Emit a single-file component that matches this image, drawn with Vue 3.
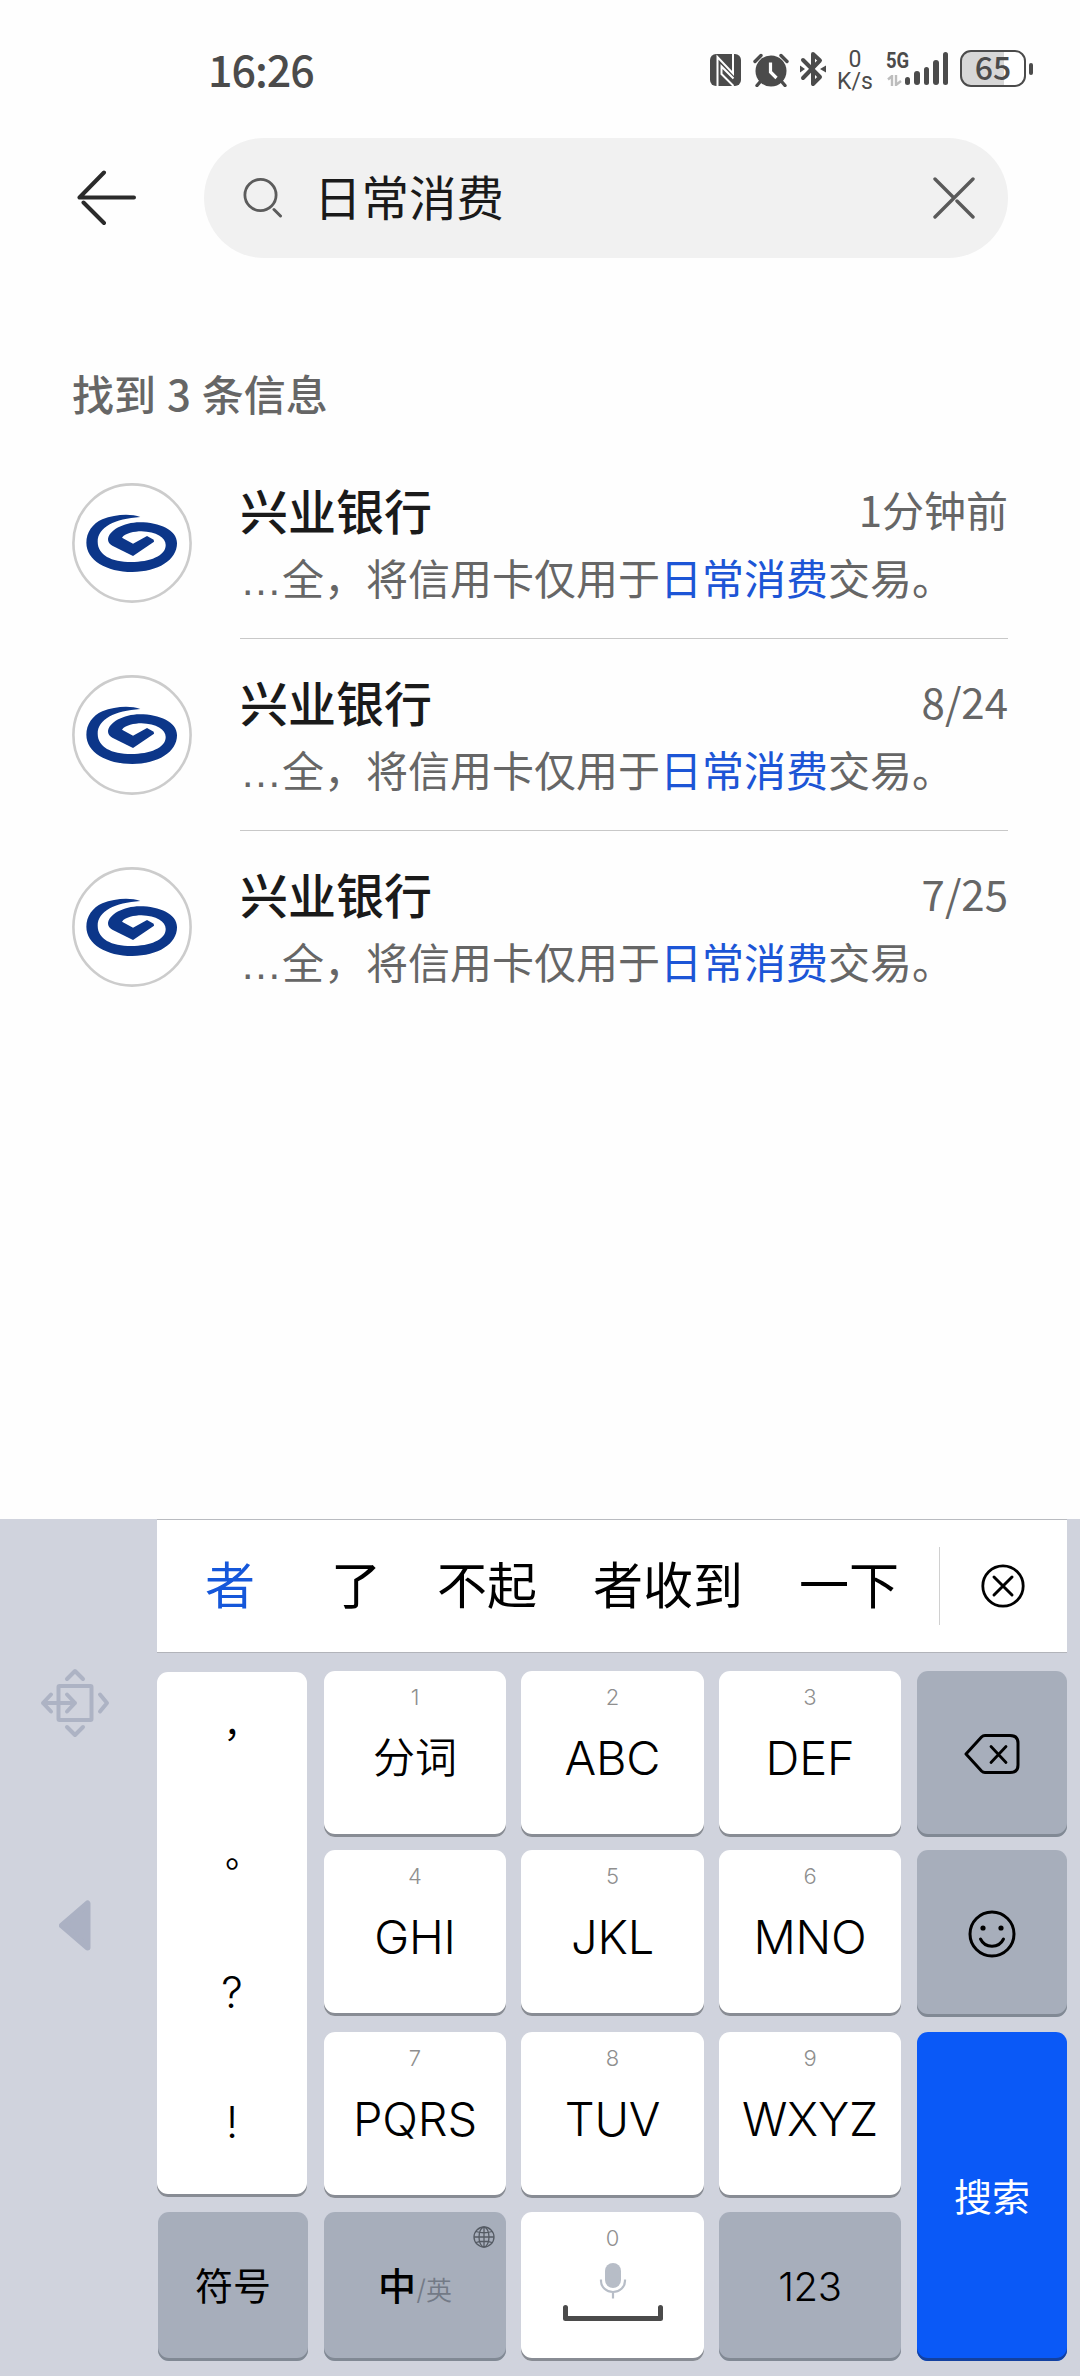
<script setup>
const results = [
  { name: '兴业银行', time: '1分钟前' },
  { name: '兴业银行', time: '8/24' },
  { name: '兴业银行', time: '7/25' },
]
const bars = [8, 14, 18, 25, 33]
const keys = [
  { n: '1', t: '分词', cjk: true },
  { n: '2', t: 'ABC' },
  { n: '3', t: 'DEF' },
  { n: '4', t: 'GHI' },
  { n: '5', t: 'JKL' },
  { n: '6', t: 'MNO' },
  { n: '7', t: 'PQRS' },
  { n: '8', t: 'TUV' },
  { n: '9', t: 'WXYZ' },
]
</script>

<template>
  <div class="screen">
    <header class="status">
      <span class="clock">16:26</span>
      <div class="indicators">
        <svg class="nfc" width="31" height="32" viewBox="0 0 31 32">
          <rect width="31" height="32" rx="6" fill="#4b4b4b" />
          <path d="M7.500 32V3L23 19.500V0M23.500 32 11.500 20V12.500L23.500 24.500" fill="none" stroke="#fff" stroke-width="2" />
        </svg>
        <svg class="alarm" width="36" height="34" viewBox="0 0 36 34">
          <path d="M2 8.500 8 2.500M34 8.500 28 2.500M7 29 4 32.500M29 29l3 3.500" stroke="#4b4b4b" stroke-width="3.400" stroke-linecap="round" />
          <circle cx="18" cy="18" r="15.500" fill="#4b4b4b" />
          <path d="M17.500 9.500V19l6 6" fill="none" stroke="#fff" stroke-width="3.200" />
        </svg>
        <svg class="bt" width="26" height="36" viewBox="0 0 26 36">
          <path d="M3 9 20 26 13 33V3L20 9.500 3 27" fill="none" stroke="#4b4b4b" stroke-width="4" stroke-linecap="round" stroke-linejoin="round" />
          <path d="M0 14.500 5 18 0 21.500ZM26 14.500 20 18l6 3.500Z" fill="#4b4b4b" />
        </svg>
        <div class="rate"><span>0</span><span>K/s</span></div>
        <div class="signal">
          <div class="net">
            <b>5G</b>
            <svg width="15" height="11" viewBox="0 0 15 11"><path d="M1 4.500 5 1V11M9 0V10L14 6" fill="none" stroke="#bdbdbd" stroke-width="2.400" /></svg>
          </div>
          <div class="bars"><i v-for="h in bars" :key="h" :style="{ height: h + 'px' }"></i></div>
        </div>
        <div class="battery"><div class="cell">65</div><i></i></div>
      </div>
    </header>

    <div class="searchrow">
      <svg class="back" width="60" height="56" viewBox="0 0 60 56">
        <path d="M27 2.500 2.500 27.500H57M6.500 32.500 27 53" fill="none" stroke="#2b2b2b" stroke-width="4" stroke-linecap="round" stroke-linejoin="round" />
      </svg>
      <div class="pill">
        <svg width="40" height="40" viewBox="0 0 40 40">
          <circle cx="17.500" cy="17" r="15.600" fill="none" stroke="#5c5c5c" stroke-width="2.800" />
          <path d="M31 31.500 37.500 38" stroke="#5c5c5c" stroke-width="3" stroke-linecap="round" />
        </svg>
        <span class="query">日常消费</span>
        <svg width="42" height="42" viewBox="0 0 42 42">
          <path d="M2 2 20 20M24 24 40 40M40 2 2 40" stroke="#5a5a5a" stroke-width="3.400" stroke-linecap="round" />
        </svg>
      </div>
    </div>

    <p class="count">找到 3 条信息</p>

    <ul class="list">
      <li v-for="(r, i) in results" :key="i">
        <svg class="avatar" width="120" height="120" viewBox="0 0 120 120">
          <circle cx="60" cy="60" r="58.600" fill="#fff" stroke="#ccc" stroke-width="2.600" />
          <path transform="translate(-12.300 -13) scale(.3333)" fill="#0c3689" d="M242 141C212 130 165 133 128 148C98 161 80 188 80 218C80 270 140 306 218 306C295 306 352 270 352 220C352 180 300 157 240 157C192 157 145 182 145 210C146 218 150 222 158 227L220 258L283 215L282 209L262 198L220 221L187 203C195 190 225 184 245 184C290 186 318 202 318 225C318 258 270 276 215 276C155 276 114 255 114 215C114 172 165 146 242 141Z" />
        </svg>
        <div class="body">
          <div class="top"><span class="name">{{ r.name }}</span><span class="time">{{ r.time }}</span></div>
          <div class="snippet"><span class="dots">…</span>全，将信用卡仅用于<em>日常消费</em>交易。</div>
        </div>
      </li>
    </ul>

    <section class="keyboard">
      <aside>
        <svg width="70" height="70" viewBox="0 0 70 70" fill="none" stroke="#adb3c4" stroke-width="4" stroke-linecap="round" stroke-linejoin="round">
          <rect x="18.500" y="18" width="33" height="34" rx="1" />
          <path d="M27 11 35 3l8 8M27 59l8 8 8-8M60 26.500 67 35l-7 8.500M11 26.500 3 35l8 8.500M3 35H35M27 26.500 35 35l-8 8.500" />
        </svg>
        <svg class="tri" width="32" height="51" viewBox="0 0 32 51"><path d="M3 25.500 28.500 3.500V47.500Z" fill="#abb1c3" stroke="#abb1c3" stroke-width="6" stroke-linejoin="round" /></svg>
      </aside>
      <div class="main">
        <div class="cands">
          <span class="on">者</span><span>了</span><span>不起</span><span>者收到</span><span>一下</span>
          <div class="clear">
            <svg width="44" height="44" viewBox="0 0 44 44" fill="none" stroke="#000" stroke-linecap="round">
              <circle cx="22" cy="22" r="20.200" stroke-width="2.800" /><path d="M13 13 31 31M31 13 13 31" stroke-width="3" />
            </svg>
          </div>
        </div>
        <div class="pad">
          <div class="left">
            <div class="key punct"><span>，</span><span>。</span><span class="lat">?</span><span class="lat">!</span></div>
            <div class="key gray sym">符号</div>
          </div>
          <div class="mid">
            <div v-for="k in keys" :key="k.n" class="key">
              <small>{{ k.n }}</small><span class="lbl" :class="{ cjk: k.cjk }">{{ k.t }}</span>
            </div>
            <div class="key gray lang">
              <svg class="globe" width="22" height="22" viewBox="0 0 22 22" fill="none" stroke="#555b64" stroke-width="1.300">
                <circle cx="11" cy="11" r="10" /><ellipse cx="11" cy="11" rx="5" ry="10" /><path d="M11 1V21M1 11H21M3 5.500Q11 8 19 5.500M3 16.500Q11 14 19 16.500" />
              </svg>
              <b>中</b><i>/</i><span>英</span>
            </div>
            <div class="key space">
              <small>0</small>
              <svg class="mic" width="28" height="36" viewBox="0 0 28 36">
                <rect x="6" y="0" width="16" height="25" rx="8" fill="#b7bdc7" />
                <path d="M2 16.500V18a12 11 0 0 0 24 0v-1.500M14 29v6.500" fill="none" stroke="#b7bdc7" stroke-width="2.200" />
              </svg>
              <svg width="100" height="16" viewBox="0 0 100 16"><path d="M2.500 2.500V13.500H97.500V2.500" fill="none" stroke="#4b4b4b" stroke-width="5" stroke-linecap="round" stroke-linejoin="round" /></svg>
            </div>
            <div class="key gray num">123</div>
          </div>
          <div class="right">
            <div class="key gray">
              <svg width="56" height="42" viewBox="0 0 56 42" fill="none" stroke="#000" stroke-linecap="round" stroke-linejoin="round">
                <path d="M2 21 17.500 4Q19 2.500 21 2.500H46Q54 2.500 54 10V32Q54 39.500 46 39.500H21Q19 39.500 17.500 38Z" stroke-width="3" />
                <path d="M27 13.500 42 29.500M42 13.500 27 29.500" stroke-width="2.800" />
              </svg>
            </div>
            <div class="key gray">
              <svg width="48" height="48" viewBox="0 0 48 48" fill="none" stroke="#000">
                <circle cx="24" cy="24" r="22" stroke-width="3" />
                <path d="M12.500 29C17 38.500 31 38.500 35.500 29" stroke-width="3" stroke-linecap="round" />
                <circle cx="15" cy="18" r="2.600" fill="#000" stroke="none" /><circle cx="33" cy="18" r="2.600" fill="#000" stroke="none" />
              </svg>
            </div>
            <div class="key go">搜索</div>
          </div>
        </div>
      </div>
    </section>
  </div>
</template>

<style>
body { margin: 0; background: #fff; }
</style>

<style scoped>
* { box-sizing: border-box; }
.screen {
  width: 1080px; height: 2376px; overflow: hidden; background: #fefefe;
  display: flex; flex-direction: column;
  font-family: "Noto Sans CJK SC", sans-serif; color: #1a1a1a;
}
svg { display: block; flex: none; }
.status { height: 138px; padding: 50px 47px 0 208px; display: flex; justify-content: space-between; flex: none; color: #4b4b4b; }
.clock { font-size: 43px; line-height: 36px; font-weight: 500; letter-spacing: -1px; }
.indicators { display: flex; height: 37px; }
.nfc { margin: 4px 12px 0 0; }
.alarm { margin: 3px 11px 0 0; }
.bt { margin: 1px 12px 0 0; }
.rate { display: flex; flex-direction: column; align-items: center; width: 34px; margin-right: 14px; font: 400 23px/22px Roboto, sans-serif; margin-top: -1px; }
.signal { display: flex; width: 62px; height: 37px; margin-right: 12px; }
.net { width: 19px; white-space: nowrap; }
.net b { display: block; font: 700 22px/22px Roboto, sans-serif; transform: scaleX(.84); transform-origin: 0 0; width: 30px; }
.net svg { margin: 3px 0 0 1px; }
.bars { display: flex; align-items: flex-end; gap: 4px; height: 35px; }
.bars i { width: 5.4px; border-radius: 3px; background: #4b4b4b; }
.battery { display: flex; align-items: center; gap: 3px; height: 37px; }
.battery .cell { width: 66px; height: 37px; border: 2.5px solid #4b4b4b; border-radius: 11px; background: linear-gradient(90deg, #d7d7d7 42px, #fff 42px); font-size: 32px; line-height: 28px; font-weight: 500; text-align: center; }
.battery i { width: 4px; height: 12px; border-radius: 2px; background: #4b4b4b; }

.searchrow { display: flex; align-items: center; height: 120px; padding: 0 72px 0 77px; gap: 67px; flex: none; }
.pill { flex: 1; height: 120px; border-radius: 60px; background: #f1f1f1; display: flex; align-items: center; padding: 0 33px 0 39px; }
.query { flex: 1; font-size: 47.500px; line-height: 60px; margin: -4px 0 0 31px; }
.count { margin: 105px 0 0 72px; font-size: 42px; line-height: 60px; font-weight: 500; color: #666; flex: none; height: 84px; word-spacing: 1.5px; }

.list { margin: 0; padding: 0 72px; list-style: none; flex: 1; }
.list li { display: flex; height: 192px; gap: 48px; }
.avatar { margin-top: 36px; }
.body { flex: 1; padding-top: 30px; border-bottom: 1px solid #c8c8c8; }
.list li:last-child .body { border: 0; }
.top { display: flex; justify-content: space-between; height: 65px; line-height: 64px; }
.name { font-size: 48px; font-weight: 500; }
.time { font-size: 42px; color: #666; }
.snippet { font-size: 42px; line-height: 70px; color: #666; white-space: nowrap; }
.dots { font-family: "Liberation Sans", sans-serif; }
.snippet em { font-style: normal; color: #1c55d6; }

.keyboard { height: 857px; flex: none; display: flex; background: #d0d3dd; }
aside { width: 157px; display: flex; flex-direction: column; padding: 149px 0 0 40px; }
.tri { margin: 162px 0 0 19px; }
.main { width: 910px; }
.cands { height: 134px; border-top: 1px solid #b9bbc0; border-bottom: 1px solid #b2b4ba; background: #fff; display: flex; align-items: center; padding-left: 48px; font-size: 50px; line-height: 60px; color: #000; }
.cands > span { margin: -8px 56px 0 0; }
.cands > span:first-child { margin-right: 76px; }
.cands > .on { color: #1557da; }
.clear { border-left: 1px solid #d0d0d0; height: 78px; width: 127px; margin-left: -16px; display: flex; align-items: center; padding-left: 41px; }
.pad { display: flex; padding-top: 18px; }
.left { width: 151px; margin-right: 16px; display: flex; flex-direction: column; }
.mid { width: 577px; margin-right: 16px; display: grid; grid-template-columns: 182px 183px 182px; column-gap: 15px; grid-template-rows: 179px 182px 180px 149px; }
.right { width: 150px; display: flex; flex-direction: column; }
.key { position: relative; height: 166px; border-radius: 11px; background: #fff; box-shadow: inset 0 -3px 0 #888c94; display: flex; flex-direction: column; align-items: center; color: #000; }
.gray { background: #a7aebb; box-shadow: inset 0 -3px 0 #818994; justify-content: center; }
.punct { width: 150px; height: 525px; margin: 1px 0 15px; }
.punct span { height: 130px; font: 400 36px/120px "Noto Sans CJK TC", sans-serif; }
.punct .lat { font: 350 43px/121px Inter, sans-serif; }
.sym { height: 149px; width: 150px; margin-left: 1px; font-size: 38px; line-height: 50px; padding-bottom: 5px; }
.key small { font: 300 22px/26px Inter, sans-serif; color: #8f8f8f; margin-top: 13px; }
.lbl { font: 300 47px/60px Inter, sans-serif; letter-spacing: -.2px; margin-top: 18px; }
.lbl.cjk { font: 350 42px/60px "Noto Sans CJK SC", sans-serif; letter-spacing: 0; margin-top: 15px; }
.lang { height: 149px; flex-direction: row; align-items: center; font-size: 38px; line-height: 50px; padding-bottom: 6px; }
.lang b { font-weight: 500; }
.lang i { font: 300 28px/50px Inter, sans-serif; color: #737a86; margin-top: 12px; }
.lang span { font-size: 26px; color: #737a86; margin-top: 10px; font-weight: 350; }
.globe { position: absolute; top: 14px; right: 11px; }
.space { height: 149px; }
.space .mic { margin: 12px 0 6px; }
.num { height: 149px; font: 350 40px/50px Inter, sans-serif; letter-spacing: -.3px; }
.right .key { margin-bottom: 13px; }
.right .key + .key { margin-bottom: 15px; height: 167px; }
.right .go { height: 329px !important; background: #0a59f7; box-shadow: inset 0 -3px 0 #1341a0; color: #fff; justify-content: center; font-size: 38px; line-height: 50px; padding-bottom: 4px; }
</style>
